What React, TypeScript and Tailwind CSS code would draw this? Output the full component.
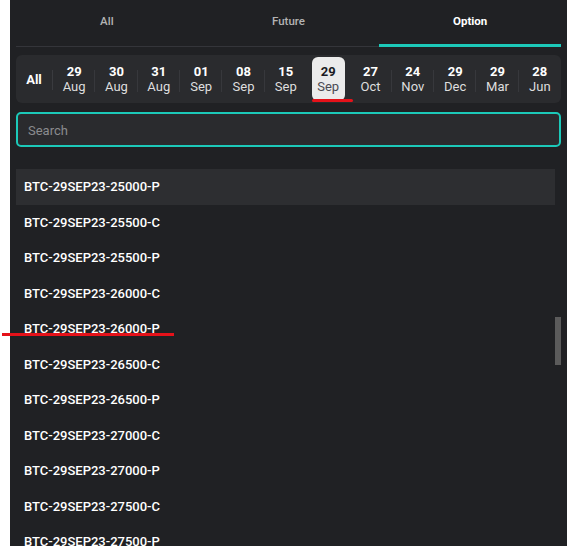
import { useState } from 'react';

const dates = [
  ['29', 'Aug'], ['30', 'Aug'], ['31', 'Aug'], ['01', 'Sep'], ['08', 'Sep'], ['15', 'Sep'],
  ['29', 'Sep'], ['27', 'Oct'], ['24', 'Nov'], ['29', 'Dec'], ['29', 'Mar'], ['28', 'Jun'],
];

const symbols = [
  '25000-P', '25500-C', '25500-P', '26000-C', '26000-P', '26500-C',
  '26500-P', '27000-C', '27000-P', '27500-C', '27500-P',
].map(s => `BTC-29SEP23-${s}`);

export default function App() {
  const [tab, setTab] = useState('Option');
  const [date, setDate] = useState(6);

  return (
    <div className="relative flex w-[567px] h-[546px] overflow-hidden bg-white" style={{ fontFamily: 'Roboto, "Noto Sans", sans-serif' }}>
      <div className="w-[10px] shrink-0" />
      <div className="flex-1 bg-[#202124] px-[6px] relative">
        {/* Tabs */}
        <div className="grid grid-cols-3 h-[47px] border-b border-[#34353a]">
          {['All', 'Future', 'Option'].map(t => (
            <button key={t} onClick={() => setTab(t)}
              className={`text-[11.5px] flex items-center justify-center -mb-px border-b-[3px] ${tab === t ? 'border-[#1cc9b9] text-white font-bold' : 'border-transparent text-[#b3b3b3] font-medium'}`}>
              {t}
            </button>
          ))}
        </div>

        {/* Expiry dates */}
        <div className="mt-[8px] h-[48px] rounded-md bg-[#2a2b2e] grid grid-cols-[37px_repeat(12,1fr)] items-stretch">
          <div className="flex items-center justify-center text-[13px] font-bold text-white border-r border-[#3a3b3f] my-[15px]">All</div>
          {dates.map(([d, m], i) => (
            <div key={i} className={`flex items-center justify-center pt-[2px] pb-[4px] ${i < 11 && i !== 5 && i !== 6 ? 'relative after:absolute after:right-0 after:top-[15px] after:bottom-[13px] after:w-px after:bg-[#37383c]' : ''}`}>
              <button onClick={() => setDate(i)}
                className={`w-[33px] h-full rounded-md flex flex-col items-center justify-center leading-[15px] pt-px ${date === i ? 'bg-[#ebebeb]' : ''}`}>
                <span className={`text-[13px] font-bold ${date === i ? 'text-[#1b1b22]' : 'text-white'}`}>{d}</span>
                <span className={`text-[13px] ${date === i ? 'text-[#4a4a52]' : 'text-[#dedede]'}`}>{m}</span>
              </button>
            </div>
          ))}
        </div>

        {/* Search */}
        <div className="mt-[9px] h-[35px] rounded-[5px] border-2 border-[#1cc9b9] bg-[#2a2b2e] flex items-center px-[10px] pt-[2px]">
          <input placeholder="Search" className="w-full bg-transparent text-[13px] text-white placeholder-[#8a8b8f] outline-none" />
        </div>

        {/* Symbols */}
        <div className="mt-[22px] mr-[6px]">
          {symbols.map((s, i) => (
            <div key={s} className={`h-[35.5px] flex items-center pl-[8px] text-[13px] font-medium text-white ${i === 0 ? 'bg-[#2d2e31]' : ''}`}>
              {s}
            </div>
          ))}
        </div>

        <div className="absolute left-[545px] top-[317px] w-[6px] h-[48px] bg-[#5b5b5b]" />
      </div>

      {/* red markers */}
      <div className="absolute left-[312px] top-[99px] w-[41px] h-[3px] rounded-full bg-[#e5121a]" />
      <div className="absolute left-[2px] top-[333px] w-[172px] h-[3px] bg-[#e5121a]" />
    </div>
  );
}
